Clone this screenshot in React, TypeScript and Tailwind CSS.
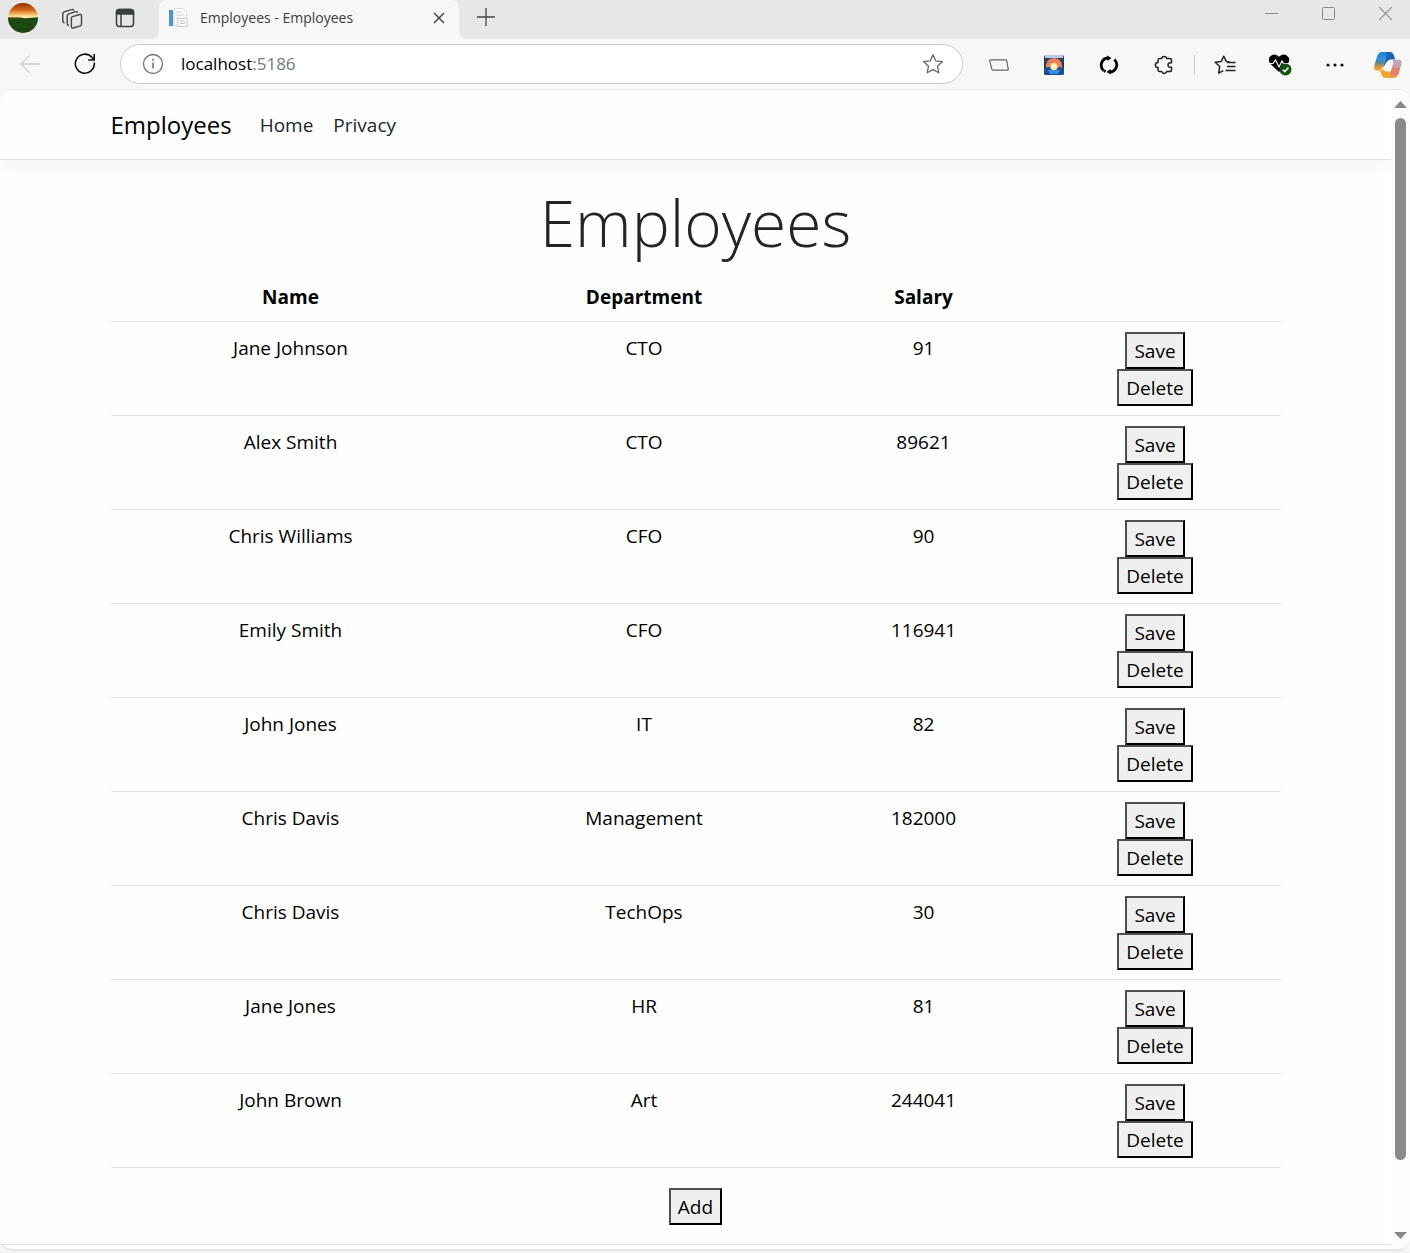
import React from "react";

const employees = [
  { name: "Jane Johnson", department: "CTO", salary: 91 },
  { name: "Alex Smith", department: "CTO", salary: 89621 },
  { name: "Chris Williams", department: "CFO", salary: 90 },
  { name: "Emily Smith", department: "CFO", salary: 116941 },
  { name: "John Jones", department: "IT", salary: 82 },
  { name: "Chris Davis", department: "Management", salary: 182000 },
  { name: "Chris Davis", department: "TechOps", salary: 30 },
  { name: "Jane Jones", department: "HR", salary: 81 },
  { name: "John Brown", department: "Art", salary: 244041 },
];

function ClassicButton({ children }: { children: React.ReactNode }) {
  return (
    <button
      type="button"
      className="h-[37px] border-2 border-t-[#4f4f4f] border-l-[#4f4f4f] border-r-black border-b-black bg-[#efefef] px-[7px] text-[19px] leading-[30px] text-black"
    >
      {children}
    </button>
  );
}

function ToolButton({ label, children }: { label: string; children: React.ReactNode }) {
  return (
    <button type="button" aria-label={label} className="flex size-7 shrink-0 items-center justify-center">
      {children}
    </button>
  );
}

function Avatar() {
  return (
    <svg width="30" height="30" viewBox="0 0 30 30">
      <defs>
        <clipPath id="avatar-clip">
          <circle cx="15" cy="15" r="15" />
        </clipPath>
        <linearGradient id="avatar-sky" x1="0" y1="0" x2="0" y2="1">
          <stop offset="0" stopColor="#8f2d0a" />
          <stop offset="0.5" stopColor="#d9701c" />
          <stop offset="0.85" stopColor="#fbd98a" />
          <stop offset="1" stopColor="#fff3c4" />
        </linearGradient>
      </defs>
      <g clipPath="url(#avatar-clip)">
        <rect width="30" height="15" fill="url(#avatar-sky)" />
        <path d="M0 14.500h12l5 .7 13-1V30H0z" fill="#1d4a12" />
        <path d="M0 14.500h10l6 1H0z" fill="#7a4a14" />
        <path d="M5 23h3v1H5zM12 26h5v1h-5zM19 21h4v1h-4zM9 19h3v1H9zM17 28h6v1h-6z" fill="#20300c" />
        <path d="M21 25h5v1h-5z" fill="#3b2612" />
      </g>
    </svg>
  );
}

function WorkspacesIcon() {
  return (
    <svg width="22" height="22" viewBox="0 0 22 22" fill="none" stroke="#444" strokeWidth="1.4" strokeLinejoin="round" strokeLinecap="round">
      <path d="M11.500 8.600 18.800 6.500q1.700-.4 1.700 1.300v8.400q0 1.200-1.200 1.600l-7 2.200q-1.900.5-1.900-1.400v-8.400q0-1.200 1.100-1.600z" />
      <path d="M16.600 4.400q-.4-1.100-1.800-.7L8 5.800Q6.200 6.400 6.200 8v7.500q0 1.500 1.300 2" />
      <path d="M12.600 2.200q-.5-1-1.900-.6L3.600 3.700Q1.800 4.300 1.800 6v6.800q0 1.500 1.300 2" />
    </svg>
  );
}

function TabActionsIcon() {
  return (
    <svg width="20" height="20" viewBox="0 0 20 20" fill="none" stroke="#3b403c" strokeWidth="1.500">
      <rect x="1.500" y="1.500" width="17" height="17" rx="3" />
      <path d="M1.500 6V4q0-2.500 3-2.500h11q3 0 3 2.500v2z" fill="#3b403c" />
      <path d="M6 6v12" />
    </svg>
  );
}

function Favicon() {
  return (
    <svg width="20" height="20" viewBox="0 0 20 20">
      <rect x="1" y="2" width="4" height="16" fill="#4f93cf" />
      <path d="M6 .5h9l3.500 4v13H6z" fill="#fbfbfb" stroke="#d8d8d8" />
      <path d="M8 4h6M8 7h8M8 10h3" stroke="#d0d0d0" />
      <path d="M10 10.500h9v8h-9z" fill="#fff" stroke="#c8c8c8" />
      <path d="M12 13h5M12 15.500h5" stroke="#bdbdbd" />
    </svg>
  );
}

function CopilotIcon() {
  return (
    <svg width="28" height="26" viewBox="0 0 28 26">
      <defs>
        <linearGradient id="cp-a" x1="0" y1="0" x2="0" y2="1">
          <stop offset="0" stopColor="#1c7fd6" />
          <stop offset="0.35" stopColor="#2b92dc" />
          <stop offset="0.6" stopColor="#5f8690" />
          <stop offset="0.8" stopColor="#d89a32" />
          <stop offset="1" stopColor="#f0a028" />
        </linearGradient>
        <linearGradient id="cp-b" x1="0" y1="0" x2="0" y2="1">
          <stop offset="0" stopColor="#b9a6c4" />
          <stop offset="0.4" stopColor="#c9a0a6" />
          <stop offset="0.5" stopColor="#e2806a" />
          <stop offset="0.78" stopColor="#e2806a" />
          <stop offset="1" stopColor="#f2aa2c" />
        </linearGradient>
      </defs>
      <path d="M8 0h8q-3 1-4 5l-3 9q-1 4-4 4.500H3Q-.8 18.500.500 13L3 4.500Q4.500 0 8 0z" fill="url(#cp-a)" />
      <path d="M12 0h4q3 0 4 3.500l1.200 4H17q-3 0-4.300 4l-1.200 3.500H9l3-10Q13 1 12 0z" fill="#1d63b5" />
      <path d="M17.500 7.500h6.500q4.500 0 3.300 5L24.800 21q-1.300 5-5.300 5h-7q2.500-1 3.500-4l3-10q1-3.500-1.500-4.500z" fill="url(#cp-b)" />
      <path d="M5 18.500q3.500-.5 4.500-3.500l3-5q1.500-2.500 5-2.500-3 2-4 6l-1.500 4.500h-2q-1 4-3 4-1.500-.5-2-3.500z" fill="#f7f3f0" />
      <path d="M5 18.500q2.500 0 4-1.500 1 2.500 4.500 2.500h3l-.8 3Q15 26 12 26q-3.500 0-4.500-3.500-.8-3-2.500-4z" fill="#f0a52b" />
    </svg>
  );
}

function TabStrip() {
  return (
    <header className="flex h-[39px] items-stretch bg-[#e7e7e7]">
      <div className="flex w-[159px] shrink-0 items-center bg-[#f7f7f7]">
        <div className="flex h-full w-full items-center rounded-br-lg bg-[#e7e7e7] pl-2">
          <button type="button" aria-label="Profile" className="mb-1">
            <Avatar />
          </button>
          <button type="button" aria-label="Workspaces" className="mb-0.5 ml-[23px]">
            <WorkspacesIcon />
          </button>
          <button type="button" aria-label="Tab actions" className="mb-[3px] ml-8">
            <TabActionsIcon />
          </button>
        </div>
      </div>
      <div className="flex w-[300px] shrink-0 items-center rounded-t-lg bg-[#f7f7f7] pr-3 pb-1 pl-[9px]">
        <Favicon />
        <span className="ml-3 flex-1 truncate text-[14px] leading-5 text-[#3d3d3d]">Employees - Employees</span>
        <button type="button" aria-label="Close tab" className="p-0.5">
          <svg width="12" height="12" viewBox="0 0 12 12" stroke="#3d3d3d" strokeWidth="1.400">
            <path d="M1 1l10 10M11 1 1 11" />
          </svg>
        </button>
      </div>
      <div className="flex flex-1 bg-[#f7f7f7]">
        <div className="flex flex-1 items-start justify-between rounded-bl-lg bg-[#e7e7e7]">
          <button type="button" aria-label="New tab" className="mt-2 ml-[18px]">
            <svg width="18" height="18" viewBox="0 0 18 18" stroke="#444" strokeWidth="1.300">
              <path d="M9 0v18M0 9h18" />
            </svg>
          </button>
          <div className="mt-[7px] mr-[18px] flex gap-11 text-[#8a8a8a]">
            <button type="button" aria-label="Minimize">
              <svg width="13" height="13" viewBox="0 0 13 13" stroke="currentColor">
                <path d="M0 6.500h13" />
              </svg>
            </button>
            <button type="button" aria-label="Maximize">
              <svg width="13" height="13" viewBox="0 0 13 13" fill="none" stroke="currentColor">
                <rect x=".5" y=".5" width="12" height="12" rx="1" />
              </svg>
            </button>
            <button type="button" aria-label="Close window">
              <svg width="13" height="13" viewBox="0 0 13 13" stroke="currentColor" strokeWidth="1.200">
                <path d="M0 0l13 13M13 0 0 13" />
              </svg>
            </button>
          </div>
        </div>
      </div>
    </header>
  );
}

function Toolbar() {
  return (
    <div className="flex h-[50px] items-center bg-[#f7f7f7] pr-2 pl-4">
      <ToolButton label="Back">
        <svg width="20" height="18" viewBox="0 0 20 18" fill="none" stroke="#cfcfcf" strokeWidth="1.400">
          <path d="M20 9H1M9.500.5 1 9l8.500 8.500" />
        </svg>
      </ToolButton>
      <div className="ml-[27px] flex">
        <ToolButton label="Refresh">
          <svg width="22" height="22" viewBox="0 0 22 22" fill="none" stroke="#111" strokeWidth="1.600">
            <path d="M20.300 9.500a9.500 9.500 0 1 1-2.200-5L20 6.600M20.200 1v6h-6" />
          </svg>
        </ToolButton>
      </div>
      <div className="ml-[21px] flex h-10 flex-1 items-center rounded-full border border-[#cbcbcb] bg-white pr-[18px] pl-[21px]">
        <svg width="22" height="22" viewBox="0 0 22 22" fill="none" stroke="#757575" strokeWidth="1.300">
          <circle cx="11" cy="11" r="9.500" />
          <path d="M11 9.500v6" strokeWidth="1.600" />
          <circle cx="11" cy="6.800" r="1" fill="#757575" stroke="none" />
        </svg>
        <span className="ml-[17px] flex-1 text-[17px] leading-6 text-black">
          localhost<span className="text-[#6f7d75]">:5186</span>
        </span>
        <button type="button" aria-label="Add to favorites">
          <svg width="22" height="22" viewBox="0 0 22 22" fill="none" stroke="#666" strokeWidth="1.300" strokeLinejoin="round">
            <path d="m11 1.800 2.700 6 6.800.8-5 4.600 1.300 6.600L11 16.600l-5.800 3.200 1.300-6.600-5-4.600 6.800-.8z" />
          </svg>
        </button>
      </div>
      <div className="mt-0.5 ml-[22px] flex items-center gap-[27px]">
        <ToolButton label="Sidebar panel">
          <svg width="20" height="12" viewBox="0 0 20 12" fill="none" stroke="#6b646b" strokeWidth="1.200">
            <path d="M1.500.8h15q1 0 1.200 1l1.500 8q.2 1.400-1 1.400H4q-1 0-1.200-1L.700 2Q.5.8 1.500.8z" />
          </svg>
        </ToolButton>
        <ToolButton label="Sunrise extension">
          <svg width="20" height="20" viewBox="0 0 20 20">
            <rect width="20" height="20" rx="2" fill="#24405f" />
            <path d="M1 0h18v3H1z" fill="#b9cbe0" />
            <path d="M2 13V10a8 7 0 0 1 16 0v3z" fill="#e57f5c" />
            <path d="M0 13l5-1 5 1 5-1 5 1v5q0 2-2 2H2q-2 0-2-2z" fill="#1b4f96" />
            <path d="M4 15h12l-2 4H6z" fill="#2f8fe0" />
            <circle cx="10" cy="11.500" r="3.800" fill="#ffd989" />
            <circle cx="10" cy="11.500" r="2.200" fill="#fffbe8" />
          </svg>
        </ToolButton>
        <ToolButton label="Sync">
          <svg width="20" height="20" viewBox="0 0 20 20" fill="none" stroke="#000" strokeWidth="2.800">
            <path d="M4.600 15.500A7.200 7.200 0 0 1 9 3" />
            <path d="M6.500 16.600l-1.600-1" />
            <path d="M15.400 4.500A7.200 7.200 0 0 1 11 17" />
            <path d="M8 .5l4.500 2.500L8.500 6zM12 19.500 7.500 17l4-3z" fill="#000" stroke="none" />
          </svg>
        </ToolButton>
        <ToolButton label="Extensions">
          <svg width="20" height="20" viewBox="0 0 20 20" fill="none" stroke="#222" strokeWidth="1.500" strokeLinejoin="round">
            <path d="M5.500 3.500h2.200a2.600 2.600 0 0 1 5 0h3q1.800 0 1.800 1.800v2.400h-1.200a2.300 2.300 0 0 0 0 4.600h1.200v2.400q0 1.800-1.800 1.800h-3a2.600 2.600 0 0 1-5 0H5.500q-1.500 0-1.500-1.800v-2.100a2.600 2.600 0 0 1 0-5.200V5.300q0-1.800 1.500-1.800z" />
          </svg>
        </ToolButton>
      </div>
      <div className="mx-4 mt-0.5 h-5 w-px bg-[#cccccc]" />
      <div className="mt-0.5 flex items-center gap-[27px]">
        <ToolButton label="Favorites">
          <svg width="22" height="20" viewBox="0 0 22 20" fill="none" stroke="#222" strokeWidth="1.500" strokeLinejoin="round">
            <path d="M15.500 6.800 12.300 6.400 9.800 1.200 7.200 6.500 1.200 7.300l4.500 4.200-1 6.700 4.600-2.500M13 7.500h8.500M13 11.500h8.500M11.500 15.500h10" />
          </svg>
        </ToolButton>
        <ToolButton label="Browser essentials">
          <svg width="24" height="22" viewBox="0 0 24 22" fill="none">
            <path d="M11 18 2.500 10Q-.5 6 1.800 3 5-.8 9 1.200l2 1.600 2-1.600q4-2 7.300 1.800 2.200 3-.8 7z" fill="#000" />
            <path d="M0 9.500h5l2.500-3.500 3.500 7 3-6 1.500 2.500H22" stroke="#f7f7f7" strokeWidth="1.200" />
            <circle cx="17.500" cy="15.500" r="6" fill="#145214" />
            <path d="m14.800 15.700 2 1.900 3.600-4" stroke="#fff" strokeWidth="1.500" />
          </svg>
        </ToolButton>
        <ToolButton label="Settings and more">
          <svg width="18" height="4" viewBox="0 0 18 4" fill="#111">
            <circle cx="2" cy="2" r="1.600" />
            <circle cx="9" cy="2" r="1.600" />
            <circle cx="16" cy="2" r="1.600" />
          </svg>
        </ToolButton>
        <div className="-ml-0.5 flex">
          <ToolButton label="Copilot">
            <CopilotIcon />
          </ToolButton>
        </div>
      </div>
    </div>
  );
}

function Scrollbar() {
  return (
    <div className="flex w-[19px] shrink-0 flex-col items-center bg-[#fcfcfc] pt-[11px] pb-[10px]">
      <svg width="13" height="7" viewBox="0 0 13 7" fill="#8a8a8a">
        <path d="M6.500 0 13 7H0z" />
      </svg>
      <div className="mt-[10px] mb-[72px] w-[11px] flex-1 rounded-full bg-[#8a8a8a]" />
      <svg width="13" height="7" viewBox="0 0 13 7" fill="#8a8a8a">
        <path d="M0 0h13L6.500 7z" />
      </svg>
    </div>
  );
}

export default function App() {
  return (
    <div className="min-h-screen bg-[#f3f3f3] font-['Open_Sans','Noto_Sans',sans-serif]">
      <TabStrip />
      <Toolbar />
      <div className="bg-[#f7f7f7]">
        <div className="flex overflow-hidden rounded-xl border-t border-b-2 border-[#e8e8e8] bg-[#fefefe]">
          <div className="min-w-0 flex-1">
            <nav className="border-b border-[#dee2e6] shadow-[0_5px_20px_rgba(0,0,0,0.05)]">
              <div className="mx-auto flex h-[69px] max-w-[1170px] items-center">
                <a href="#home" className="mr-7 text-[24px] leading-9 text-black">
                  Employees
                </a>
                <a href="#home" className="mr-5 text-[19px] leading-[30px] text-[#212529]">
                  Home
                </a>
                <a href="#privacy" className="text-[19px] leading-[30px] text-[#212529]">
                  Privacy
                </a>
              </div>
            </nav>
            <main className="mx-auto max-w-[1170px] pt-[22px] pb-[19px] text-center">
              <h1 className="mb-2 text-[64px] leading-[81px] font-light text-[#212529]">Employees</h1>
              <table className="w-full table-fixed border-collapse text-[19px] leading-[30px] text-black">
                <colgroup>
                  <col className="w-[360px]" />
                  <col className="w-[347px]" />
                  <col className="w-[212px]" />
                  <col className="w-[251px]" />
                </colgroup>
                <thead>
                  <tr className="border-b border-[#dee2e6]">
                    <th className="px-2.5 pt-[11px] pb-[9px]">Name</th>
                    <th className="px-2.5 pt-[11px] pb-[9px]">Department</th>
                    <th className="px-2.5 pt-[11px] pb-[9px]">Salary</th>
                    <th aria-label="Actions" />
                  </tr>
                </thead>
                <tbody>
                  {employees.map((employee, index) => (
                    <tr key={index} className="border-b border-[#dee2e6] align-top">
                      <td className="px-2.5 pt-[11px] pb-[9px]">{employee.name}</td>
                      <td className="px-2.5 pt-[11px] pb-[9px]">{employee.department}</td>
                      <td className="px-2.5 pt-[11px] pb-[9px]">{employee.salary}</td>
                      <td className="pt-2.5 pb-[9px]">
                        <div className="flex flex-col items-center">
                          <ClassicButton>Save</ClassicButton>
                          <ClassicButton>Delete</ClassicButton>
                        </div>
                      </td>
                    </tr>
                  ))}
                </tbody>
              </table>
              <div className="mt-5">
                <ClassicButton>Add</ClassicButton>
              </div>
            </main>
            <footer className="h-[5px] border-t border-[#dee2e6]" />
          </div>
          <Scrollbar />
        </div>
      </div>
    </div>
  );
}
